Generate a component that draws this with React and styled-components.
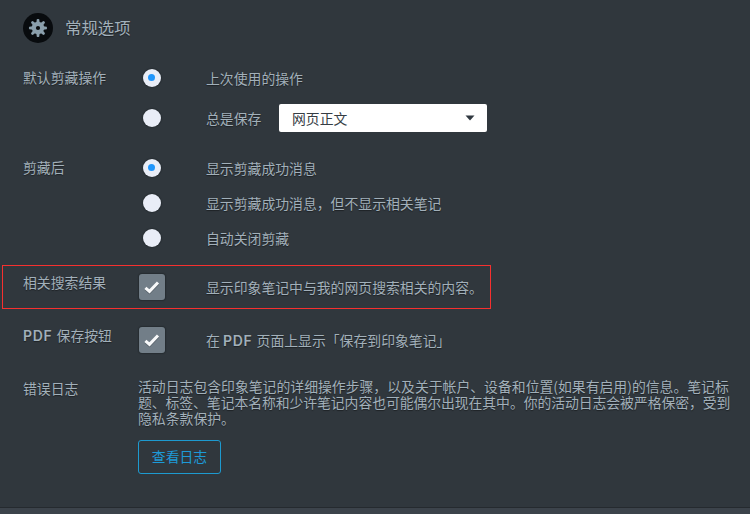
import React from "react";
import styled, { createGlobalStyle } from "styled-components";

const Global = createGlobalStyle`
  * { box-sizing: border-box; }
  body { margin: 0; background: #30373d; overflow: hidden; }
`;

const Page = styled.main`
  display: flex;
  flex-direction: column;
  width: 750px;
  height: 514px;
  background: #30373d;
  color: #a2b0ba;
  font-family: "Noto Sans CJK SC", sans-serif;
  font-size: 13.85px;
  line-height: 16px;
  text-shadow: 0 1px 1px rgba(0, 0, 0, 0.4);
`;

const Header = styled.header`
  display: flex;
  align-items: center;
  gap: 12px;
  height: 56px;
  padding-left: 23px;
`;

const Title = styled.h1`
  margin: 0;
  padding-bottom: 2px;
  font-size: 16.4px;
  font-weight: 400;
  line-height: 20px;
`;

const Section = styled.section`
  display: grid;
  grid-template-columns: 115px 1fr;
  margin-top: ${(p) => p.$top}px;
  padding-left: 23px;
`;

const Framed = styled(Section)`
  width: 489px;
  height: 44px;
  margin-left: 2px;
  padding-left: 20px;
  border: 1px solid #f6302f;
`;

const Label = styled.div`
  padding-top: ${(p) => p.$pad}px;
  white-space: nowrap;
`;

const Options = styled.div`
  display: flex;
  flex-direction: column;
  gap: ${(p) => p.$gap || 0}px;
`;

const Option = styled.label`
  display: grid;
  grid-template-columns: 68px auto auto;
  justify-content: start;
  align-items: center;
  height: ${(p) => p.$h}px;
`;

const OptionText = styled.span`
  white-space: nowrap;
`;

const Radio = styled.span`
  display: grid;
  place-items: center;
  width: 18px;
  height: 18px;
  margin-left: 5px;
  border-radius: 50%;
  background: #e9edf7;
  box-shadow: 0 0 1px 1px rgba(20, 25, 30, 0.3);

  &::after {
    content: "";
    width: 7px;
    height: 7px;
    margin: 0 1px 1px 0;
    border-radius: 50%;
    background: ${(p) => (p.$on ? "#2196fb" : "transparent")};
  }
`;

const Check = styled.span`
  display: grid;
  place-items: center;
  width: 26px;
  height: 26px;
  margin-left: 1px;
  border-radius: 3px;
  background: #727e88;
  box-shadow: 0 0 1px 1px rgba(20, 25, 30, 0.35);
`;

const Select = styled.span`
  display: flex;
  align-items: center;
  justify-content: space-between;
  width: 208px;
  height: 28px;
  margin-left: 17.6px;
  padding: 0 12px 1px 13px;
  border-radius: 2px;
  background: #fff;
  color: #363d44;
  text-shadow: none;
`;

const Latin = styled.span`
  font-family: Inter, sans-serif;
  font-size: 14px;
  font-weight: 600;
  letter-spacing: 0.7px;
  margin-right: 1px;
`;

const Log = styled.div`
  display: flex;
  flex-direction: column;
  align-items: flex-start;
`;

const Line = styled.span`
  letter-spacing: ${(p) => p.$track || 0}px;
  white-space: nowrap;
`;

const Button = styled.button`
  width: 83px;
  height: 34px;
  margin-top: 14px;
  padding: 0 0 2px;
  border: 1px solid #1d9ad0;
  border-radius: 3px;
  background: transparent;
  color: #1d9ad8;
  font: inherit;
`;

const Footer = styled.footer`
  height: 7px;
  margin-top: auto;
  border-top: 1px solid #252a2f;
  background: #3c434b;
`;

const teeth = [0, 45, 90, 135, 180, 225, 270, 315];

const Gear = () => (
  <svg width="30" height="30" viewBox="0 0 30 30">
    <circle cx="15" cy="15" r="15" fill="#080b0e" />
    <g fill="#8a9fac">
      {teeth.map((a) => (
        <path key={a} d="M13.3 10 L13.8 6.3 Q15 5.5 16.2 6.3 L16.7 10Z" transform={`rotate(${a} 15 15)`} />
      ))}
      <circle cx="15" cy="15" r="6.2" />
    </g>
    <circle cx="15" cy="15" r="2.1" fill="#080b0e" />
  </svg>
);

const Tick = () => (
  <Check>
    <svg width="18" height="18" viewBox="0 0 18 18" fill="none" strokeWidth="3">
      <path d="M2.4 10.9 L6.5 14.5 L15 5.6" stroke="#59636b" />
      <path d="M2.4 9.8 L6.5 13.4 L15 4.5" stroke="#f8f9fa" />
    </svg>
  </Check>
);

const after = [
  { on: true, text: "显示剪藏成功消息" },
  { text: "显示剪藏成功消息，但不显示相关笔记" },
  { text: "自动关闭剪藏" },
];

export default function App() {
  return (
    <Page>
      <Global />
      <Header>
        <Gear />
        <Title>常规选项</Title>
      </Header>
      <Section $top={2}>
        <Label $pad={11}>默认剪藏操作</Label>
        <Options>
          <Option $h={40}><Radio $on /><OptionText>上次使用的操作</OptionText></Option>
          <Option $h={40}>
            <Radio /><OptionText>总是保存</OptionText>
            <Select>
              网页正文
              <svg width="10" height="6" viewBox="0 0 10 6"><path d="M0.5 0.5H9.5L5 5.5Z" fill="#303840" /></svg>
            </Select>
          </Option>
        </Options>
      </Section>
      <Section $top={13}>
        <Label $pad={8}>剪藏后</Label>
        <Options $gap={1}>
          {after.map((o, i) => (
            <Option $h={34} key={i}><Radio $on={o.on} /><OptionText>{o.text}</OptionText></Option>
          ))}
        </Options>
      </Section>
      <Framed $top={10}>
        <Label $pad={8}>相关搜索结果</Label>
        <Option $h={42}><Tick /><OptionText>显示印象笔记中与我的网页搜索相关的内容。</OptionText></Option>
      </Framed>
      <Section $top={11}>
        <Label $pad={7}><Latin>PDF</Latin> 保存按钮</Label>
        <Option $h={40}><Tick /><OptionText>在&nbsp;<Latin>PDF</Latin> 页面上显示「保存到印象笔记」</OptionText></Option>
      </Section>
      <Section $top={18}>
        <Label $pad={2}>错误日志</Label>
        <Log>
          <Line>活动日志包含印象笔记的详细操作步骤，以及关于帐户、设备和位置(如果有启用)的信息。笔记标</Line>
          <Line $track={-0.07}>题、标签、笔记本名称和少许笔记内容也可能偶尔出现在其中。你的活动日志会被严格保密，受到</Line>
          <Line>隐私条款保护。</Line>
          <Button>查看日志</Button>
        </Log>
      </Section>
      <Footer />
    </Page>
  );
}
